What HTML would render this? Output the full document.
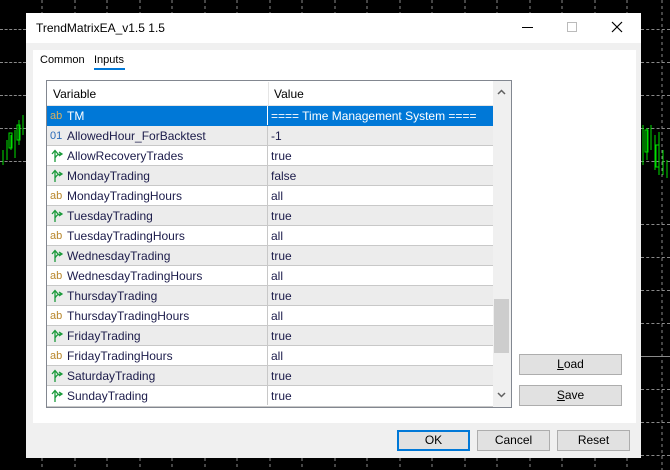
<!DOCTYPE html>
<html><head><style>
*{margin:0;padding:0;box-sizing:border-box}
body{width:670px;height:470px;background:#000;position:relative;overflow:hidden;font-family:"Liberation Sans",sans-serif;font-size:12px;color:#000}
.a{position:absolute}
.hl{position:absolute;height:1px;border-top:1px dashed #8a8a8a}
.dlg{left:26px;top:13px;width:615px;height:445px;background:#f0f0f0}
.row{position:absolute;left:47px;width:446px;height:20px;border-bottom:1px solid #c8c8c8;color:#1b1b4a}
.row .c1{position:absolute;left:0;width:221px;height:19px;border-right:1px solid #c8c8c8;padding-left:20px;line-height:20px}
.row .c2{position:absolute;left:224px;line-height:20px}
.ic{position:absolute;left:3px;top:0;line-height:20px;font-size:11px}
.ar{position:absolute;left:4px;top:3px}
.g{background:#ececec}
.btn{position:absolute;height:21px;background:#e1e1e1;border:1px solid #adadad;text-align:center;line-height:19px;font-size:12px}
</style></head><body>
<div class="hl" style="left:0;top:29px;width:26px"></div>
<div class="hl" style="left:0;top:62px;width:26px"></div>
<div class="hl" style="left:0;top:95px;width:26px"></div>
<div class="hl" style="left:0;top:128px;width:26px"></div>
<div class="hl" style="left:0;top:161px;width:26px"></div>
<div class="hl" style="left:641px;top:29px;width:29px"></div>
<div class="hl" style="left:641px;top:62px;width:29px"></div>
<div class="hl" style="left:641px;top:95px;width:29px"></div>
<div class="hl" style="left:641px;top:128px;width:29px"></div>
<div class="hl" style="left:641px;top:161px;width:29px"></div>
<div class="hl" style="left:641px;top:224px;width:29px"></div>
<div class="hl" style="left:641px;top:257px;width:29px"></div>
<div class="hl" style="left:641px;top:290px;width:29px"></div>
<div class="hl" style="left:641px;top:323px;width:29px"></div>
<div class="hl" style="left:641px;top:356px;width:29px;border-top:1px solid #8a8a8a"></div>
<div class="hl" style="left:641px;top:389px;width:29px"></div>
<div class="hl" style="left:641px;top:422px;width:29px"></div>
<div class="hl" style="left:641px;top:455px;width:29px"></div>
<svg class="a" style="left:0;top:0" width="670" height="470">
<g stroke="#8a8a8a" stroke-dasharray="3,3">
<path d="M42 0V13M75 0V13M107 0V13M140 0V13M172 0V13M205 0V13M237 0V13M270 0V13M302 0V13M335 0V13M367 0V13M400 0V13M432 0V13M465 0V13M497 0V13M530 0V13M562 0V13M595 0V13M627 0V13M662 0V470"/>
<path d="M42 458V470M75 458V470M107 458V470M140 458V470M172 458V470M205 458V470M237 458V470M270 458V470M302 458V470M335 458V470M367 458V470M400 458V470M432 458V470M465 458V470M497 458V470M530 458V470M562 458V470M595 458V470M627 458V470"/>
</g>
<g stroke="#00e000" fill="none">
<path d="M3 150V165M7 140V160M11 135V150M15 130V158M19 120V145M23 115V135"/>
<rect x="9" y="133" width="3" height="15"/><rect x="17" y="125" width="3" height="15"/>
<path d="M643 125V165M647 128V160M651 125V150M655 135V170M659 132V175M663 150V175M667 160V178"/>
<rect x="645" y="130" width="3" height="22"/><rect x="656" y="145" width="3" height="22"/>
</g>
<defs><symbol id="arr" viewBox="0 0 14 14"><path d="M4 13V2M1 5L4 1.5L7 5M4 9Q6 5 10 5M8 3L11 5L8 7" stroke="#1a9a3a" stroke-width="1.3" fill="none"/></symbol></defs>
</svg>
<div class="a dlg"></div>
<div class="a" style="left:26px;top:13px;width:615px;height:30px;background:#fff"></div>
<div class="a" style="left:36px;top:19px;font-size:12px;line-height:18px">TrendMatrixEA_v1.5 1.5</div>
<div class="a" style="left:522px;top:27px;width:11px;height:1px;background:#000"></div>
<div class="a" style="left:567px;top:22px;width:10px;height:10px;border:1px solid #bbb"></div>
<svg class="a" style="left:611px;top:21px" width="12" height="12"><path d="M1 1L11 11M11 1L1 11" stroke="#000" stroke-width="1.2"/></svg>
<div class="a" style="left:33px;top:50px;width:603px;height:373px;background:#fff"></div>
<div class="a" style="left:40px;top:52px;line-height:16px;font-size:11px">Common</div>
<div class="a" style="left:94px;top:52px;line-height:16px;font-size:11px">Inputs</div>
<div class="a" style="left:94px;top:68px;width:31px;height:2px;background:#0078d7"></div>
<div class="a" style="left:46px;top:80px;width:466px;height:328px;border:1px solid #828790;background:#fff"></div>
<div class="a" style="left:47px;top:81px;width:446px;height:25px;border-bottom:1px solid #e5e5e5"></div>
<div class="a" style="left:268px;top:82px;width:1px;height:24px;background:#e5e5e5"></div>
<div class="a" style="left:53px;top:86px;line-height:16px">Variable</div>
<div class="a" style="left:274px;top:86px;line-height:16px">Value</div>
<div class="a" style="left:493px;top:81px;width:18px;height:326px;background:#f0f0f0"></div>
<div class="a" style="left:494px;top:299px;width:15px;height:54px;background:#cdcdcd"></div>
<svg class="a" style="left:496px;top:88px" width="12" height="310"><path d="M2 6L5.5 2.5L9 6M2 305L5.5 308.5L9 305" stroke="#606060" stroke-width="1.5" fill="none"/></svg>

<div class="row" style="top:106px;background:#0078d7;color:#fff;border-bottom-color:#0078d7"><span class="ic" style="color:#d8b060">ab</span><div class="c1" style="border-right-color:#fff">TM</div><div class="c2">==== Time Management System ====</div></div>
<div class="row g" style="top:126px"><span class="ic" style="color:#2a6ab8">01</span><div class="c1">AllowedHour_ForBacktest</div><div class="c2">-1</div></div>
<div class="row" style="top:146px"><svg class="ar" width="14" height="14"><use href="#arr"/></svg><div class="c1">AllowRecoveryTrades</div><div class="c2">true</div></div>
<div class="row g" style="top:166px"><svg class="ar" width="14" height="14"><use href="#arr"/></svg><div class="c1">MondayTrading</div><div class="c2">false</div></div>
<div class="row" style="top:186px"><span class="ic" style="color:#b8862a">ab</span><div class="c1">MondayTradingHours</div><div class="c2">all</div></div>
<div class="row g" style="top:206px"><svg class="ar" width="14" height="14"><use href="#arr"/></svg><div class="c1">TuesdayTrading</div><div class="c2">true</div></div>
<div class="row" style="top:226px"><span class="ic" style="color:#b8862a">ab</span><div class="c1">TuesdayTradingHours</div><div class="c2">all</div></div>
<div class="row g" style="top:246px"><svg class="ar" width="14" height="14"><use href="#arr"/></svg><div class="c1">WednesdayTrading</div><div class="c2">true</div></div>
<div class="row" style="top:266px"><span class="ic" style="color:#b8862a">ab</span><div class="c1">WednesdayTradingHours</div><div class="c2">all</div></div>
<div class="row g" style="top:286px"><svg class="ar" width="14" height="14"><use href="#arr"/></svg><div class="c1">ThursdayTrading</div><div class="c2">true</div></div>
<div class="row" style="top:306px"><span class="ic" style="color:#b8862a">ab</span><div class="c1">ThursdayTradingHours</div><div class="c2">all</div></div>
<div class="row g" style="top:326px"><svg class="ar" width="14" height="14"><use href="#arr"/></svg><div class="c1">FridayTrading</div><div class="c2">true</div></div>
<div class="row" style="top:346px"><span class="ic" style="color:#b8862a">ab</span><div class="c1">FridayTradingHours</div><div class="c2">all</div></div>
<div class="row g" style="top:366px"><svg class="ar" width="14" height="14"><use href="#arr"/></svg><div class="c1">SaturdayTrading</div><div class="c2">true</div></div>
<div class="row" style="top:386px;height:21px"><svg class="ar" width="14" height="14"><use href="#arr"/></svg><div class="c1">SundayTrading</div><div class="c2">true</div></div>

<div class="btn" style="left:519px;top:354px;width:103px"><u>L</u>oad</div>
<div class="btn" style="left:519px;top:385px;width:103px"><u>S</u>ave</div>
<div class="btn" style="left:397px;top:430px;width:73px;border:2px solid #0078d7;line-height:17px">OK</div>
<div class="btn" style="left:477px;top:430px;width:73px">Cancel</div>
<div class="btn" style="left:557px;top:430px;width:73px">Reset</div>
</body></html>
